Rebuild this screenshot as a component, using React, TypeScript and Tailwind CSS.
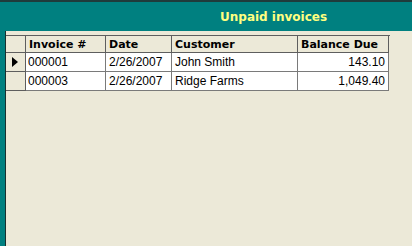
const rows = [
  { id: "000001", date: "2/26/2007", customer: "John Smith", balance: "143.10", current: true },
  { id: "000003", date: "2/26/2007", customer: "Ridge Farms", balance: "1,049.40", current: false },
];

const cols = "grid grid-cols-[20px_80px_66px_126px_91px]";

export default function App() {
  return (
    <div className="w-[412px] h-[246px] bg-[#008080] border-t-2 border-[#1f3b3b] flex flex-col overflow-hidden">
      {/* title bar */}
      <div className="h-[29px] shrink-0 flex items-center pl-[220px]">
        <span className="font-['DejaVu_Sans',sans-serif] font-bold text-[12px] text-[#ffff80]">
          Unpaid invoices
        </span>
      </div>

      {/* body */}
      <div className="flex flex-1 min-h-0">
        <div className="w-[5px] shrink-0" />
        <div className="flex-1 bg-[#ece9d8] border-l border-[#17302f] pt-[4px]">
          <div className="w-[384px] border-t border-[#5e5e5e] font-['Liberation_Sans',Arial,sans-serif] text-[12px] text-black">
            {/* header */}
            <div className={`${cols} h-[17px] font-['DejaVu_Sans',sans-serif] font-bold text-[11px] leading-none`}>
              <div className="bg-[#ece9d8] border-r border-b border-[#5e5e5e]" />
              <div className="border-r border-b border-[#5e5e5e] pl-[3px] flex items-center">Invoice #</div>
              <div className="border-r border-b border-[#5e5e5e] pl-[3px] flex items-center">Date</div>
              <div className="border-r border-b border-[#5e5e5e] pl-[3px] flex items-center">Customer</div>
              <div className="border-r border-b border-[#5e5e5e] pl-[3px] flex items-center">Balance Due</div>
            </div>

            {rows.map((r) => (
              <div key={r.id} className={`${cols} h-[19px] leading-none`}>
                <div className="bg-[#ece9d8] border-r border-b border-[#5e5e5e] flex items-center pl-[6px]">
                  {r.current && (
                    <svg width="6" height="10" viewBox="0 0 6 10">
                      <path d="M0 0 L6 5 L0 10 Z" fill="#000" />
                    </svg>
                  )}
                </div>
                <div className="bg-white border-r border-b border-[#7a7a7a] pl-[2px] flex items-center">{r.id}</div>
                <div className="bg-white border-r border-b border-[#7a7a7a] pl-[3px] flex items-center">{r.date}</div>
                <div className="bg-white border-r border-b border-[#7a7a7a] pl-[3px] flex items-center">{r.customer}</div>
                <div className="bg-white border-r border-b border-[#7a7a7a] pr-[3px] flex items-center justify-end">{r.balance}</div>
              </div>
            ))}
          </div>
        </div>
      </div>
    </div>
  );
}
